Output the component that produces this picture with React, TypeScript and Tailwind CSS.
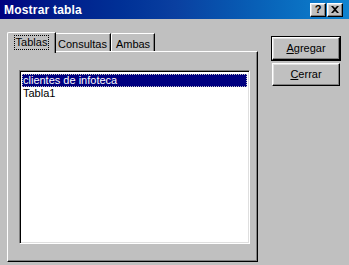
import React from "react";

const raised =
  "bg-[#c0c0c0] border border-t-white border-l-white border-r-black border-b-black shadow-[inset_-1px_-1px_0_#808080,inset_1px_1px_0_#dfdfdf]";

const TitleButton = ({ children }: { children: React.ReactNode }) => (
  <div className={`w-[16px] h-[14px] flex items-center justify-center ${raised}`}>
    {children}
  </div>
);

const Button = ({
  label,
  hot,
  isDefault,
}: {
  label: string;
  hot: string;
  isDefault?: boolean;
}) => (
  <div
    className={`w-[68px] h-[23px] flex items-center justify-center ${
      isDefault ? "outline outline-1 outline-black" : ""
    } ${raised}`}
  >
    <span>
      <u>{hot}</u>
      {label.slice(1)}
    </span>
  </div>
);

export default function App() {
  return (
    <div className="w-[349px] h-[265px] bg-[#c0c0c0] text-[11px] text-black font-['Liberation_Sans',Arial,sans-serif] flex flex-col overflow-hidden">
      {/* title bar */}
      <div className="h-[19px] flex items-center bg-gradient-to-r from-[#000080] via-[#0a3fa0] to-[#1084d0] pl-[4px] pr-[6px]">
        <span className="text-white font-bold text-[12px] tracking-[0.2px]">Mostrar tabla</span>
        <div className="ml-auto flex gap-[1px]">
          <TitleButton>
            <span className="font-bold text-[11px] leading-none">?</span>
          </TitleButton>
          <TitleButton>
            <svg width="8" height="7" viewBox="0 0 8 7">
              <path d="M0 0h2l2 2 2-2h2L5 3.5 8 7H6L4 5 2 7H0l3-3.5z" fill="black" />
            </svg>
          </TitleButton>
        </div>
      </div>

      <div className="flex flex-1">
        {/* tabs + panel */}
        <div className="pl-[7px] pt-[13px] flex flex-col">
          <div className="flex items-end h-[19px] relative z-10">
            <div className="w-[49px] h-[21px] -mb-[2px] -mr-[2px] relative z-10 bg-[#c0c0c0] border-t border-l border-white rounded-tl-[2px] border-r border-r-black shadow-[inset_-1px_0_0_#808080] flex justify-center pt-[2px]">
              <span className="h-[15px] px-[2px] leading-[13px] outline outline-1 outline-dotted outline-black -outline-offset-1 pt-[1px]">
                Tablas
              </span>
            </div>
            <div className="w-[57px] h-[18px] bg-[#c0c0c0] border-t border-l border-white rounded-tl-[2px] border-r border-r-black shadow-[inset_-1px_0_0_#808080] flex justify-center pt-[2px]">
              Consultas
            </div>
            <div className="w-[44px] h-[18px] bg-[#c0c0c0] border-t border-l border-white rounded-tl-[2px] border-r border-r-black shadow-[inset_-1px_0_0_#808080] flex justify-center pt-[2px]">
              Ambas
            </div>
          </div>
          <div className="w-[251px] h-[211px] border border-t-white border-l-white border-r-black border-b-black shadow-[inset_-1px_-1px_0_#808080] pl-[11px] pt-[18px]">
            <div className="w-[231px] h-[174px] bg-white border border-t-[#808080] border-l-[#808080] border-r-white border-b-white shadow-[inset_1px_1px_0_#000,inset_-1px_-1px_0_#dfdfdf] p-[2px] pt-[3px]">
              <div className="h-[13px] bg-[#000080] text-white leading-[13px] pl-[1px] outline outline-1 outline-dotted outline-[#c0c0c0] -outline-offset-1">
                clientes de infoteca
              </div>
              <div className="h-[13px] leading-[13px] pl-[1px]">Tabla1</div>
            </div>
          </div>
        </div>

        {/* buttons */}
        <div className="ml-[14px] pt-[18px] flex flex-col gap-[3px]">
          <Button label="Agregar" hot="A" isDefault />
          <Button label="Cerrar" hot="C" />
        </div>
      </div>
    </div>
  );
}
